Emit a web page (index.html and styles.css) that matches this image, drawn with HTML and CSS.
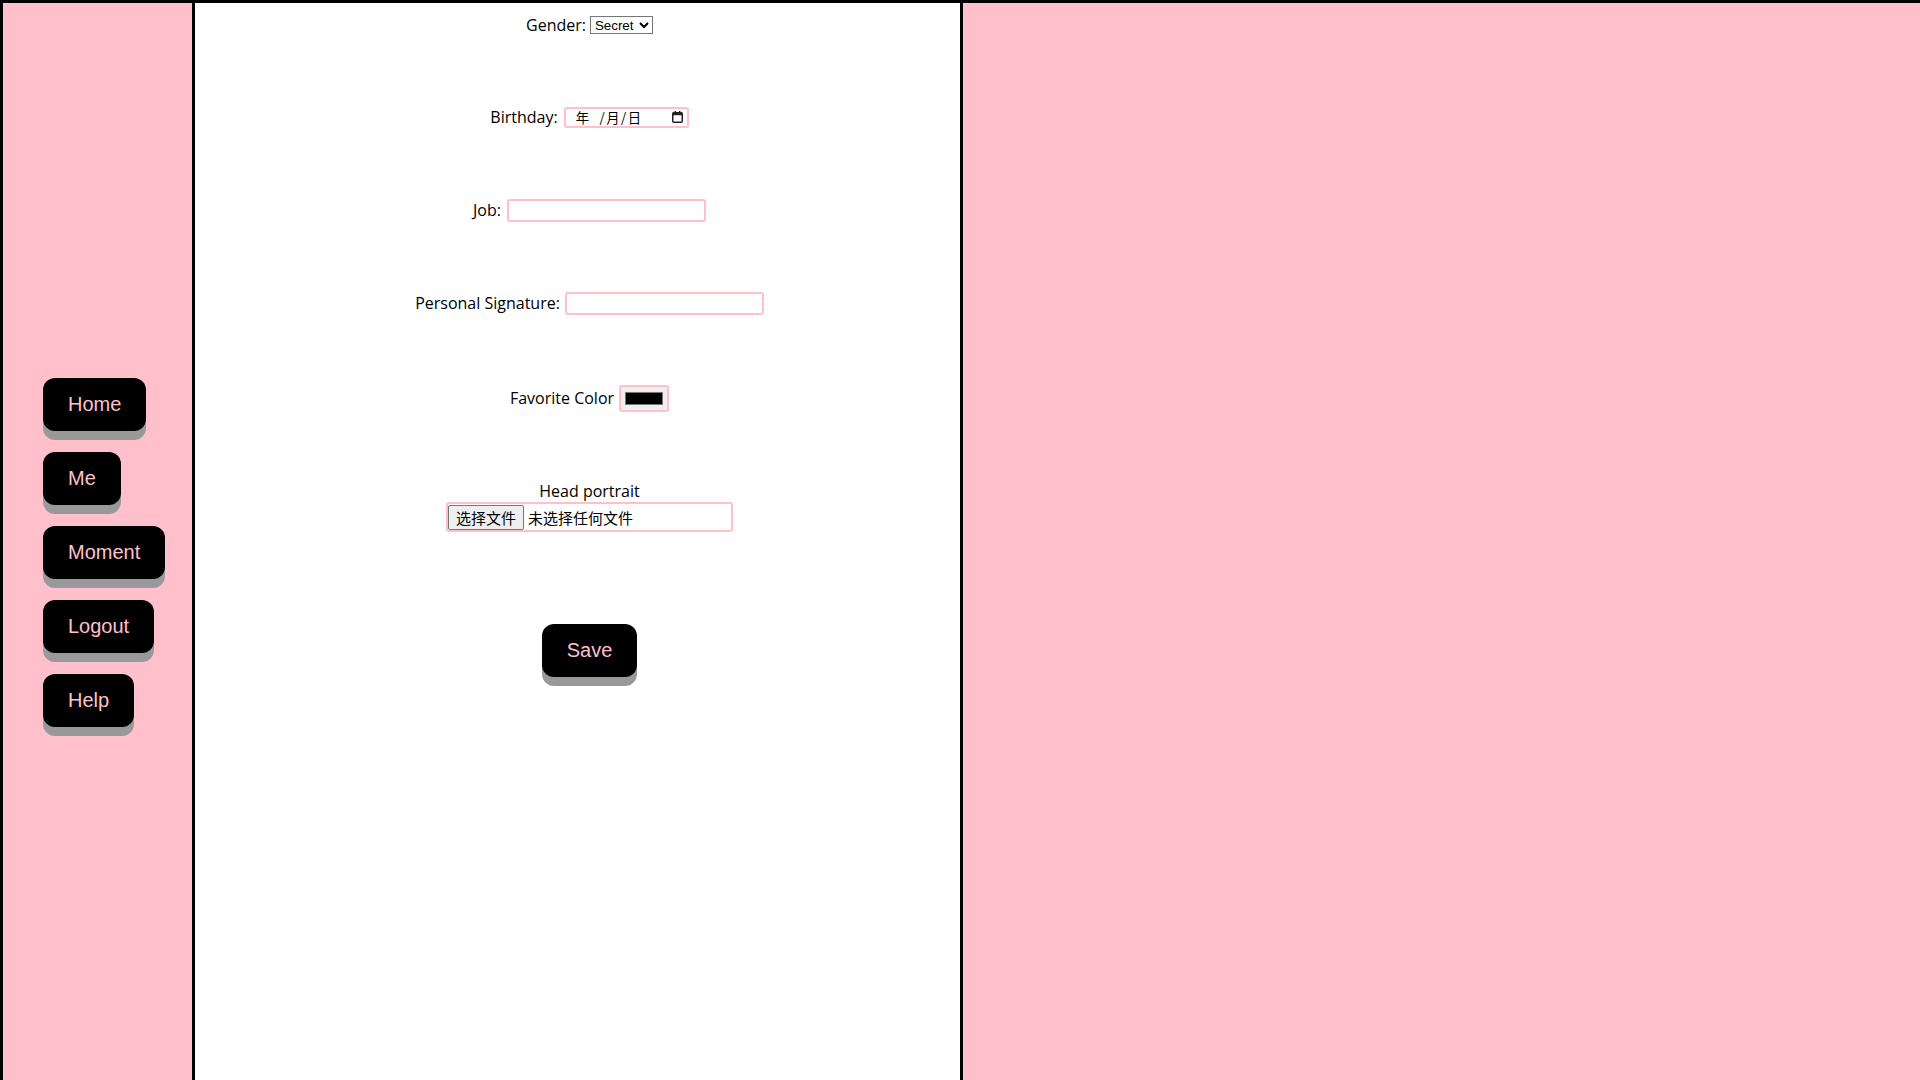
FILE: index.html
```html
<!DOCTYPE html>
<html lang="zh-CN">
<head>
<meta charset="utf-8">
<title>Profile</title>
<link rel="stylesheet" href="styles.css">
</head>
<body>
<div class="page">
  <nav class="sidebar">
    <button class="btn">Home</button>
    <button class="btn">Me</button>
    <button class="btn">Moment</button>
    <button class="btn">Logout</button>
    <button class="btn">Help</button>
  </nav>
  <main class="main">
    <div class="row row-first">
      <span class="label">Gender:</span>
      <select class="select"><option>Secret</option></select>
    </div>
    <div class="row row-2">
      <span class="label">Birthday:</span>
      <div class="date-field">
        <span class="date-text">年&nbsp;&nbsp;/月/日</span>
        <svg class="cal" width="11" height="12" viewBox="0 0 11 12"><rect x="0.75" y="1.75" width="9.5" height="9.5" rx="1" fill="none" stroke="#222" stroke-width="1.5"/><rect x="0.75" y="1.75" width="9.5" height="2.5" fill="#222"/><rect x="2.5" y="0" width="1.5" height="2.5" fill="#222"/><rect x="7" y="0" width="1.5" height="2.5" fill="#222"/></svg>
      </div>
    </div>
    <div class="row row-job">
      <span class="label">Job:</span>
      <input class="text-input" type="text">
    </div>
    <div class="row">
      <span class="label">Personal Signature:</span>
      <input class="text-input" type="text">
    </div>
    <div class="row row-color">
      <span class="label">Favorite Color</span>
      <input class="color-input" type="color" value="#000000">
    </div>
    <div class="head-label">Head portrait</div>
    <div class="file-field">
      <span class="file-btn">选择文件</span>
      <span class="file-text">未选择任何文件</span>
    </div>
    <button class="btn save">Save</button>
  </main>
  <div class="rest"></div>
</div>
</body>
</html>
```
FILE: styles.css
```css
html, body {
  margin: 0;
  padding: 0;
}
body {
  background: #ffc0cb;
  overflow: hidden;
}
.page {
  display: flex;
  height: 100vh;
  box-sizing: border-box;
  border-top: 3px solid #000;
  border-left: 3px solid #000;
}
.sidebar {
  width: 192px;
  flex: none;
  background: #ffc0cb;
  border-right: 3px solid #000;
  display: flex;
  flex-direction: column;
  align-items: flex-start;
  gap: 21px;
  padding: 375px 0 0 40px;
  box-sizing: border-box;
}
.btn {
  background: #000;
  color: #ffc0cb;
  border: none;
  border-radius: 12px;
  padding: 15px 25px;
  font-family: "Liberation Sans", Arial, sans-serif;
  font-size: 20px;
  line-height: 23px;
  box-shadow: 0 9px #999;
  cursor: pointer;
}
.main {
  width: 768px;
  flex: none;
  background: #fff;
  border-right: 3px solid #000;
  display: flex;
  flex-direction: column;
  align-items: center;
  padding: 4px 0 0 24px;
  box-sizing: border-box;
  font-family: "Open Sans", Lato, sans-serif;
  font-size: 16px;
  color: #000;
}
.rest {
  flex: 1;
}
.row {
  height: 36px;
  display: flex;
  align-items: center;
  gap: 5px;
  margin-top: 57px;
}
.row-first {
  margin-top: 0;
  gap: 4px;
}
.row-2 {
  margin-top: 56px;
  gap: 6px;
}
.row-job {
  gap: 6px;
}
.row-color {
  margin-top: 59px;
}
.label {
  white-space: nowrap;
}
.select {
  font-family: "Liberation Sans", Arial, sans-serif;
  font-size: 13.33px;
  height: 18px;
  width: 63px;
  padding: 0;
  border: 1px solid #767676;
  border-radius: 0;
  background: #fff;
  color: #000;
}
.date-field {
  width: 125px;
  height: 21px;
  box-sizing: border-box;
  border: 2px solid #ffc0cb;
  border-radius: 3px;
  display: flex;
  align-items: center;
  justify-content: space-between;
  padding: 0 4px 0 10px;
  font-family: "Noto Sans CJK SC", sans-serif;
  font-size: 13.33px;
  color: #000;
}
.date-text {
  letter-spacing: 1.5px;
}
.cal {
  display: block;
}
.text-input {
  width: 199px;
  height: 23px;
  box-sizing: border-box;
  border: 2px solid #ffc0cb;
  border-radius: 3px;
  padding: 1px 2px;
  outline: none;
}
.color-input {
  width: 50px;
  height: 27px;
  box-sizing: border-box;
  border: 2px solid #ffc0cb;
  border-radius: 3px;
  padding: 1px 2px;
  background: #efefef;
}
.head-label {
  margin-top: 65px;
  line-height: 20px;
}
.file-field {
  margin-top: 1px;
  width: 287px;
  height: 30px;
  box-sizing: border-box;
  border: 2px solid #ffc0cb;
  border-radius: 3px;
  display: flex;
  align-items: center;
  font-family: "Noto Sans CJK SC", sans-serif;
  font-size: 15px;
  color: #000;
}
.file-btn {
  height: 25px;
  width: 76px;
  box-sizing: border-box;
  background: #efefef;
  border: 1px solid #767676;
  border-radius: 2px;
  display: flex;
  align-items: center;
  justify-content: center;
  line-height: 1;
}
.file-text {
  margin-left: 4px;
  line-height: 1;
}
.save {
  margin-top: 92px;
}
```
